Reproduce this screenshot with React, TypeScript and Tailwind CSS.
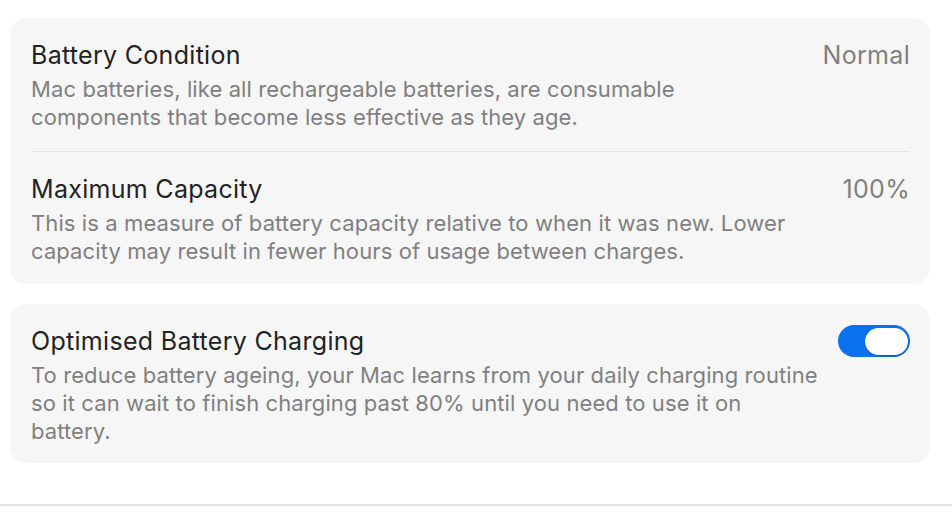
import React from "react";

const font = { fontFamily: "Inter, 'Noto Sans', sans-serif" };

function Row({
  title,
  lines,
  right,
}: {
  title: string;
  lines: string[];
  right: React.ReactNode;
}) {
  return (
    <div className="flex items-start justify-between">
      <div className="flex flex-col">
        <div className="text-[25px] leading-[28px] tracking-[0.3px] text-[#232323] whitespace-nowrap">{title}</div>
        <div className="mt-[6px] flex flex-col text-[22px] leading-[28px] tracking-[0.1px] text-[#808080]">
          {lines.map((l, i) => (
            <span key={i} className="whitespace-nowrap">
              {l}
            </span>
          ))}
        </div>
      </div>
      {right}
    </div>
  );
}

export default function App() {
  return (
    <div className="w-[952px] h-[512px] bg-white flex flex-col overflow-hidden" style={font}>
      <div className="px-[10px] pt-[18px] flex flex-col gap-[20px]">
        <div className="w-[920px] rounded-[16px] bg-[#f6f6f6] pl-[21px] pr-[20px] pt-[23px] pb-[19px]">
          <Row
            title="Battery Condition"
            lines={[
              "Mac batteries, like all rechargeable batteries, are consumable",
              "components that become less effective as they age.",
            ]}
            right={<div className="text-[25px] leading-[28px] tracking-[0.3px] text-[#808080]">Normal</div>}
          />
          <div className="h-px bg-[#e4e4e4] mt-[20px] mb-[23px]" />
          <Row
            title="Maximum Capacity"
            lines={[
              "This is a measure of battery capacity relative to when it was new. Lower",
              "capacity may result in fewer hours of usage between charges.",
            ]}
            right={<div className="text-[25px] leading-[28px] tracking-[0.3px] text-[#808080]">100%</div>}
          />
        </div>
        <div className="w-[920px] rounded-[16px] bg-[#f6f6f6] pl-[21px] pr-[20px] pt-[23px] pb-[18px]">
          <Row
            title="Optimised Battery Charging"
            lines={[
              "To reduce battery ageing, your Mac learns from your daily charging routine",
              "so it can wait to finish charging past 80% until you need to use it on",
              "battery.",
            ]}
            right={
              <div className="mt-[-2px] w-[72px] h-[32px] rounded-full bg-[#0b72ef] flex items-center justify-end pr-[2px]">
                <div className="w-[43px] h-[27px] rounded-full bg-white shadow-[0_1px_2px_rgba(0,0,0,0.25)]" />
              </div>
            }
          />
        </div>
      </div>
      <div className="mt-auto mb-[6px] h-[2px] bg-[#e5e5e5]" />
    </div>
  );
}
